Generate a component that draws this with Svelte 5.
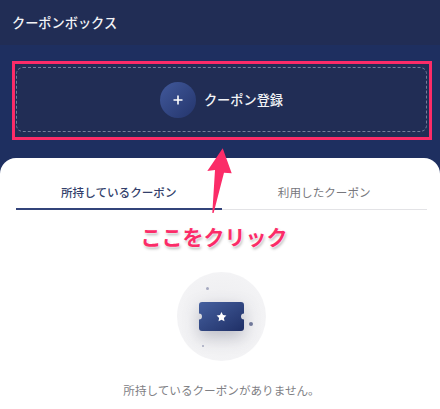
<script lang="ts">
	let tabs = [
		{ label: '所持しているクーポン', active: true },
		{ label: '利用したクーポン', active: false }
	];
</script>

<div class="page">
	<header class="title">クーポンボックス</header>

	<section class="hero">
		<div class="highlight">
			<button type="button" class="register">
				<span class="plus">
					<svg width="12" height="12" viewBox="0 0 12 12">
						<path d="M6 1.5v9M1.5 6h9" stroke="#fff" stroke-width="1.6" fill="none" />
					</svg>
				</span>
				<span>クーポン登録</span>
			</button>
		</div>
	</section>

	<section class="sheet">
		<div class="tabs">
			{#each tabs as tab}
				<div class="tab" class:active={tab.active}>{tab.label}</div>
			{/each}
		</div>

		<div class="empty-art">
			<span class="dot d1"></span>
			<span class="dot d2"></span>
			<span class="dot d3"></span>
			<div class="ticket">
				<svg width="45" height="29" viewBox="0 0 45 29">
					<defs>
						<linearGradient id="ticketFill" x1="0" y1="0" x2="1" y2="1">
							<stop offset="0" stop-color="#45609f" />
							<stop offset="1" stop-color="#1f2f66" />
						</linearGradient>
					</defs>
					<path
						d="M3 0H42a3 3 0 0 1 3 3V11.5a3 3 0 0 0 0 6V26a3 3 0 0 1-3 3H3a3 3 0 0 1-3-3V17.5a3 3 0 0 0 0-6V3a3 3 0 0 1 3-3Z"
						fill="url(#ticketFill)"
					/>
					<path
						d="M22.5 10l1.5 3 3.4.5-2.5 2.4.6 3.4-3-1.6-3 1.6.6-3.4-2.5-2.4 3.4-.5Z"
						fill="#fff"
					/>
				</svg>
			</div>
		</div>

		<p class="empty-text">所持しているクーポンがありません。</p>
	</section>

	<!-- annotation drawn on top of the screenshot -->
	<svg class="arrow" width="40" height="80" viewBox="0 0 40 80">
		<path d="M22.7 8.3 L31.7 33.3 L24 32.7 L13.6 73 L12.3 73 L15 30 L7.3 31 Z" fill="#fb2c68" />
	</svg>
	<p class="callout">ここをクリック</p>
</div>

<style>
	:global(body) {
		margin: 0;
	}
	.page {
		position: relative;
		width: 440px;
		height: 409px;
		overflow: hidden;
		background: #1e2f60;
		font-family: "Noto Sans CJK JP", "Noto Sans", sans-serif;
	}
	.title {
		height: 45px;
		box-sizing: border-box;
		padding-left: 12px;
		display: flex;
		align-items: center;
		background: #212d55;
		color: #f2f3f6;
		font-size: 13.2px;
		font-weight: 500;
	}
	.hero {
		height: 113px;
		box-sizing: border-box;
		padding: 16px 8px 0 12px;
	}
	.highlight {
		height: 79px;
		box-sizing: border-box;
		border: 3px solid #fb2c68;
		padding: 3px 2px 5px 1px;
		background: #212d55;
	}
	.register {
		width: 100%;
		height: 100%;
		box-sizing: border-box;
		border: 1px dashed #737c9a;
		border-radius: 7px;
		background: none;
		padding: 0;
		display: flex;
		align-items: center;
		justify-content: center;
		gap: 8px;
		color: #f2f3f6;
		font: inherit;
		font-size: 13.2px;
		font-weight: 500;
	}
	.plus {
		width: 36px;
		height: 36px;
		border-radius: 50%;
		display: flex;
		align-items: center;
		justify-content: center;
		background: linear-gradient(135deg, #41599b, #24356c);
	}
	.sheet {
		height: 251px;
		background: #fff;
		border-radius: 16px 16px 0 0;
		padding: 0 13px 0 16px;
		box-sizing: border-box;
	}
	.tabs {
		display: flex;
		padding-top: 16px;
	}
	.tab {
		flex: 1;
		height: 36px;
		box-sizing: border-box;
		text-align: center;
		font-size: 11.6px;
		line-height: 36px;
		color: #77777c;
		border-bottom: 1px solid #e3e3e6;
	}
	.tab.active {
		color: #333f6b;
		font-weight: 500;
		border-bottom: 2px solid #33447a;
	}
	.empty-art {
		position: relative;
		width: 89px;
		height: 89px;
		margin: 62px auto 0;
		border-radius: 50%;
		background: radial-gradient(circle, #ececef 0%, #f2f2f4 60%, #f6f6f8 100%);
		display: flex;
		align-items: center;
		justify-content: center;
	}
	.ticket {
		display: flex;
		filter: drop-shadow(0 6px 8px rgba(40, 45, 70, 0.25));
	}
	.dot {
		position: absolute;
		border-radius: 50%;
		background: #8d93ad;
	}
	.d1 {
		width: 3px;
		height: 3px;
		left: 29px;
		top: 15px;
		background: #a5a9c0;
	}
	.d2 {
		width: 4px;
		height: 4px;
		left: 72px;
		top: 50px;
		background: #747c9e;
	}
	.d3 {
		width: 2px;
		height: 2px;
		left: 25px;
		top: 73px;
		background: #a5a9c0;
	}
	.empty-text {
		margin: 20px 0 0;
		text-align: center;
		font-size: 11.6px;
		line-height: 18px;
		color: #808084;
	}
	.arrow {
		position: absolute;
		left: 200px;
		top: 140px;
	}
	.callout {
		position: absolute;
		left: 0;
		top: 222px;
		width: 428px;
		margin: 0;
		text-align: center;
		color: #fb2c68;
		font-size: 21px;
		line-height: 28px;
		font-weight: 700;
		text-shadow: 0 0 2px #fff, 0 0 2px #fff, 1px 2px 3px rgba(0, 0, 0, 0.3);
	}
</style>
